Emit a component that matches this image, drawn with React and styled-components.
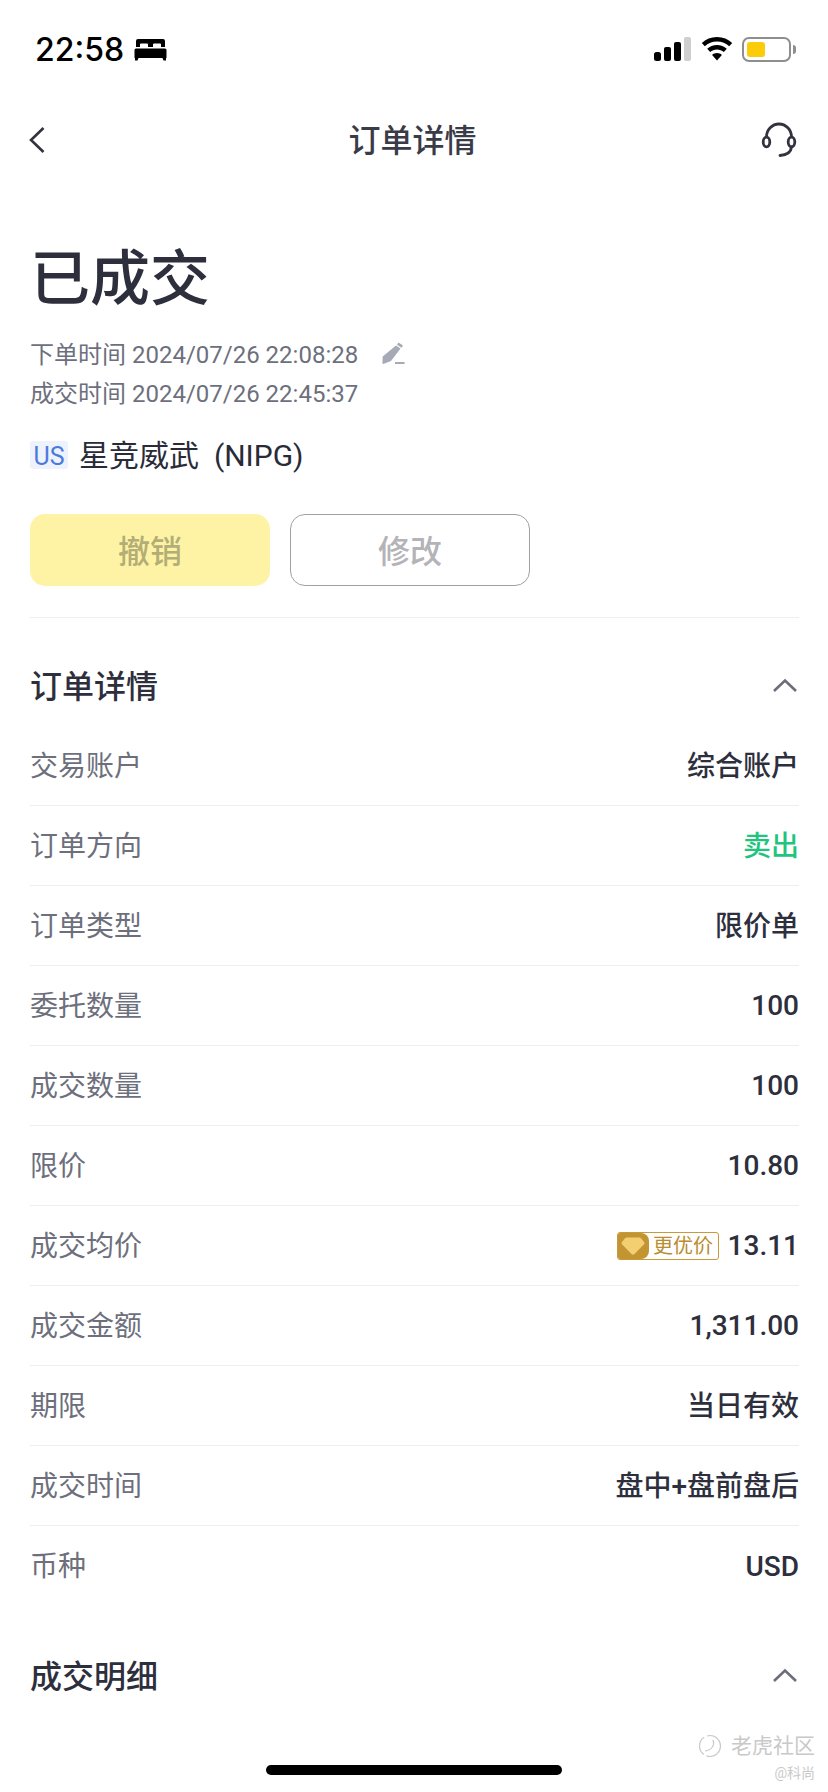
import React from 'react';
import styled, { createGlobalStyle } from 'styled-components';

const FONT = `Roboto, "Noto Sans CJK SC", sans-serif`;

const rows = [
  ["交易账户", "综合账户"],
  ["订单方向", "卖出", true],
  ["订单类型", "限价单"],
  ["委托数量", "100"],
  ["成交数量", "100"],
  ["限价", "10.80"],
  ["成交均价", "13.11", false, true],
  ["成交金额", "1,311.00"],
  ["期限", "当日有效"],
  ["成交时间", "盘中+盘前盘后"],
  ["币种", "USD"],
];

function Chevron() {
  return (
    <svg width="28" height="18" viewBox="0 0 28 18" fill="none">
      <path d="M3 16 L14 5.500 L25 16" stroke="#6b6d7c" strokeWidth="2.600" />
    </svg>
  );
}

export default function App() {
  return (
    <Page>
      <GlobalStyle />
      <StatusBar>
        <Clock>
          <Time>22:58</Time>
          <svg width="33" height="23" viewBox="0 0 33 23">
            <path fill="#000" d="M4 1h25a2 2 0 0 1 2 2V9h-4V6.500a1 1 0 0 0-1-1h-6a1 1 0 0 0-1 1V9h-5V6.500a1 1 0 0 0-1-1H7a1 1 0 0 0-1 1V9H2V3a2 2 0 0 1 2-2zM2 10.500h29a1.500 1.500 0 0 1 1.500 1.500V20h-.5v2.500h-2.500L28.500 20h-24l-1 2.500H1V20H.5v-8A1.500 1.500 0 0 1 2 10.500z" />
          </svg>
        </Clock>
        <StatusIcons>
          <svg width="37" height="24" viewBox="0 0 37 24">
            <rect x="0" y="15" width="7" height="9" rx="2.500" fill="#000" />
            <rect x="10" y="10" width="7" height="14" rx="2" fill="#000" />
            <rect x="20" y="5" width="7" height="19" rx="2" fill="#000" />
            <rect x="30" y="0" width="7" height="24" rx="2" fill="#cfcfcf" />
          </svg>
          <svg width="32" height="24" viewBox="0 0 32 24">
            <path fill="#000" d="M16 0C10 0 4.800 2.300 .8 6l3 3.200C7 6.200 11.300 4.400 16 4.400s9 1.800 12.200 4.800l3-3.200C27.200 2.300 22 0 16 0z" />
            <path fill="#000" d="M16 8c-3.800 0-7.200 1.400-9.800 3.800l3 3.200c1.800-1.600 4.200-2.600 6.800-2.600s5 1 6.800 2.600l3-3.200C23.200 9.400 19.800 8 16 8z" />
            <path fill="#000" d="M16 16c-1.900 0-3.600.7-4.900 1.900L16 23.500l4.900-5.600C19.600 16.700 17.900 16 16 16z" />
          </svg>
          <Battery>
            <BatteryLevel />
          </Battery>
        </StatusIcons>
      </StatusBar>

      <NavBar>
        <NavSide>
          <svg width="18" height="28" viewBox="0 0 18 28" fill="none">
            <path d="M15.500 2 L3 14 L15.500 26" stroke="#32333f" strokeWidth="2.600" />
          </svg>
        </NavSide>
        <NavTitle>订单详情</NavTitle>
        <NavSide $right>
          <svg width="36" height="36" viewBox="0 0 36 36" fill="none" stroke="#32333f" strokeWidth="2.800">
            <path d="M5.500 16 V15 a12.500 13 0 0 1 25 0 V16" />
            <ellipse cx="5.500" cy="20" rx="3.300" ry="4.800" />
            <ellipse cx="30.500" cy="20" rx="3.300" ry="4.800" />
            <path d="M30.500 25 C30 30 26 33 19 33.500" strokeLinecap="round" />
          </svg>
        </NavSide>
      </NavBar>

      <Content>
        <Status>已成交</Status>
        <MetaBlock>
          <MetaLine>
            下单时间 2024/07/26 22:08:28
            <svg width="26" height="24" viewBox="0 0 26 24">
              <path fill="#a6a9b6" d="M18.500 1.500l4.500 3-1.500 2.300-4.500-3zM16 4.600l4.500 3L11 20 3.200 23l-.8-.6.300-7z" />
              <rect x="15" y="21" width="9.500" height="2" fill="#a6a9b6" />
            </svg>
          </MetaLine>
          <MetaLine>成交时间 2024/07/26 22:45:37</MetaLine>
        </MetaBlock>
        <Stock>
          <Market>US</Market>
          <StockName>星竞威武&nbsp;&nbsp;(NIPG)</StockName>
        </Stock>
        <Actions>
          <CancelButton>撤销</CancelButton>
          <EditButton>修改</EditButton>
        </Actions>

        <SectionHead>
          <SectionTitle>订单详情</SectionTitle>
          <Chevron />
        </SectionHead>
        <Rows>
          {rows.map(([label, value, sell, better]) => (
            <Row key={label}>
              <Label>{label}</Label>
              <Value $sell={sell} $latin={/^[\d,.A-Z]+$/.test(value)}>
                {better && (
                  <Badge>
                    <BadgeIcon>
                      <svg width="24" height="20" viewBox="0 0 24 20">
                        <path fill="#f3cf72" d="M6 1.500h12c1 0 1.600.4 2.200 1l2.800 3.500c.6.8.6 1.500 0 2.200L13.500 18c-.9.900-2.100.900-3 0L1 8.200c-.6-.7-.6-1.400 0-2.200l2.800-3.500c.6-.6 1.200-1 2.200-1z" />
                      </svg>
                    </BadgeIcon>
                    <BadgeText>更优价</BadgeText>
                  </Badge>
                )}
                {value}
              </Value>
            </Row>
          ))}
        </Rows>

        <LastSection>
          <SectionTitle>成交明细</SectionTitle>
          <Chevron />
        </LastSection>
      </Content>

      <Watermark>
        <WatermarkMain>
          <svg width="24" height="24" viewBox="0 0 24 24" fill="none" stroke="#c9c9c9" strokeWidth="1.200">
            <circle cx="12" cy="12" r="10.500" strokeDasharray="20 3" />
            <path d="M15 6 C17 11 14 16 7 17" />
          </svg>
          老虎社区
        </WatermarkMain>
        <WatermarkUser>@科尚</WatermarkUser>
      </Watermark>
      <HomeIndicator />
    </Page>
  );
}

const GlobalStyle = createGlobalStyle`
  html, body { margin: 0; padding: 0; background: #fff; }
  * { box-sizing: border-box; }
`;
const Page = styled.div`
  position: relative;
  width: 828px;
  height: 1792px;
  overflow: hidden;
  background: #fff;
  font-family: ${FONT};
  color: #2e2f3d;
`;
const StatusBar = styled.div`
  display: flex;
  justify-content: space-between;
  align-items: center;
  height: 50px;
  margin-top: 24px;
  padding: 0 36px 0 35px;
`;
const Clock = styled.div`
  display: flex;
  align-items: center;
  gap: 10px;
`;
const Time = styled.span`
  font-family: Inter, sans-serif;
  font-size: 32px;
  font-weight: 500;
  color: #000;
`;
const StatusIcons = styled.div`
  display: flex;
  align-items: center;
  gap: 10px;
`;
const Battery = styled.div`
  position: relative;
  left: -1px;
  width: 49px;
  height: 25px;
  padding: 3px;
  border: 2px solid #8e8e8e;
  border-radius: 7px;
  &::after {
    content: "";
    position: absolute;
    right: -7px;
    top: 6px;
    width: 3px;
    height: 9px;
    border-radius: 0 3px 3px 0;
    background: #8e8e8e;
  }
`;
const BatteryLevel = styled.div`
  width: 18px;
  height: 100%;
  border-radius: 3px;
  background: #fccb0a;
`;
const NavBar = styled.div`
  display: grid;
  grid-template-columns: 1fr auto 1fr;
  align-items: center;
  height: 60px;
  margin-top: 36px;
  padding: 0 31px 0 28px;
`;
const NavSide = styled.div`
  display: flex;
  justify-content: ${props => (props.$right ? "flex-end" : "flex-start")};
`;
const NavTitle = styled.div`
  position: relative;
  top: -2px;
  font-size: 32px;
  font-weight: 500;
  color: #3a3b48;
`;
const Content = styled.div`
  padding: 0 29px 0 30px;
`;
const Status = styled.div`
  margin-top: 70px;
  font-size: 60px;
  line-height: 80px;
  font-weight: 500;
  color: #2e2f3d;
`;
const MetaBlock = styled.div`
  margin-top: 13px;
`;
const MetaLine = styled.div`
  display: flex;
  align-items: center;
  gap: 22px;
  height: 39px;
  font-size: 24px;
  color: #6d6f7d;
`;
const Stock = styled.div`
  display: flex;
  align-items: center;
  gap: 11px;
  margin-top: 20px;
`;
const Market = styled.span`
  width: 38px;
  height: 28px;
  line-height: 32px;
  margin-top: 4px;
  text-align: center;
  border-radius: 3px;
  background: #edf2fc;
  color: #4a7bdc;
  font-size: 25px;
`;
const StockName = styled.span`
  font-size: 30px;
  color: #2a2b38;
`;
const Actions = styled.div`
  display: flex;
  gap: 20px;
  margin-top: 39px;
  padding-bottom: 31px;
  border-bottom: 1px solid #eeeef0;
`;
const ActionButton = styled.button`
  width: 240px;
  height: 72px;
  padding-bottom: 4px;
  border-radius: 15px;
  font-family: ${FONT};
  font-size: 32px;
  font-weight: 500;
`;
const CancelButton = styled(ActionButton)`
  border: none;
  background: #fef3a5;
  color: #b3ad77;
`;
const EditButton = styled(ActionButton)`
  border: 1px solid #a0a0a5;
  background: #fff;
  color: #b3b3b8;
`;
const SectionHead = styled.div`
  display: flex;
  justify-content: space-between;
  align-items: center;
  height: 50px;
  margin-top: 41px;
`;
const SectionTitle = styled.div`
  font-size: 32px;
  font-weight: 500;
  color: #2e2f3d;
`;
const Rows = styled.div`
  margin-top: 17px;
`;
const Row = styled.div`
  display: flex;
  justify-content: space-between;
  align-items: center;
  height: 80px;
  padding-bottom: 4px;
  border-bottom: 1px solid #eeeef0;
  &:last-child { border-bottom: none; }
`;
const Label = styled.span`
  font-size: 28px;
  color: #6d6f7d;
`;
const Value = styled.span`
  display: flex;
  align-items: center;
  gap: 9px;
  padding-top: ${props => (props.$latin ? "4px" : "0")};
  font-size: 28px;
  font-weight: 500;
  color: ${props => (props.$sell ? "#1fc47d" : "#2e2f3d")};
`;
const Badge = styled.span`
  display: flex;
  width: 102px;
  height: 28px;
  border: 1px solid #c99a3a;
  border-radius: 3px;
  overflow: hidden;
`;
const BadgeIcon = styled.span`
  display: flex;
  align-items: center;
  justify-content: center;
  width: 31px;
  background: #c39432;
  border-radius: 0 8px 8px 0;
`;
const BadgeText = styled.span`
  flex: 1;
  text-align: center;
  font-size: 20px;
  line-height: 26px;
  font-weight: 400;
  color: #b98c2e;
`;
const LastSection = styled(SectionHead)`
  margin-top: 43px;
`;
const Watermark = styled.div`
  position: absolute;
  right: 13px;
  top: 1732px;
  display: flex;
  flex-direction: column;
  align-items: flex-end;
  color: #c9c9c9;
`;
const WatermarkMain = styled.div`
  display: flex;
  align-items: center;
  gap: 9px;
  font-size: 21px;
  line-height: 28px;
`;
const WatermarkUser = styled.div`
  margin-top: 2px;
  font-size: 14px;
`;
const HomeIndicator = styled.div`
  position: absolute;
  left: 266px;
  top: 1765px;
  width: 296px;
  height: 10px;
  border-radius: 5px;
  background: #000;
`;
